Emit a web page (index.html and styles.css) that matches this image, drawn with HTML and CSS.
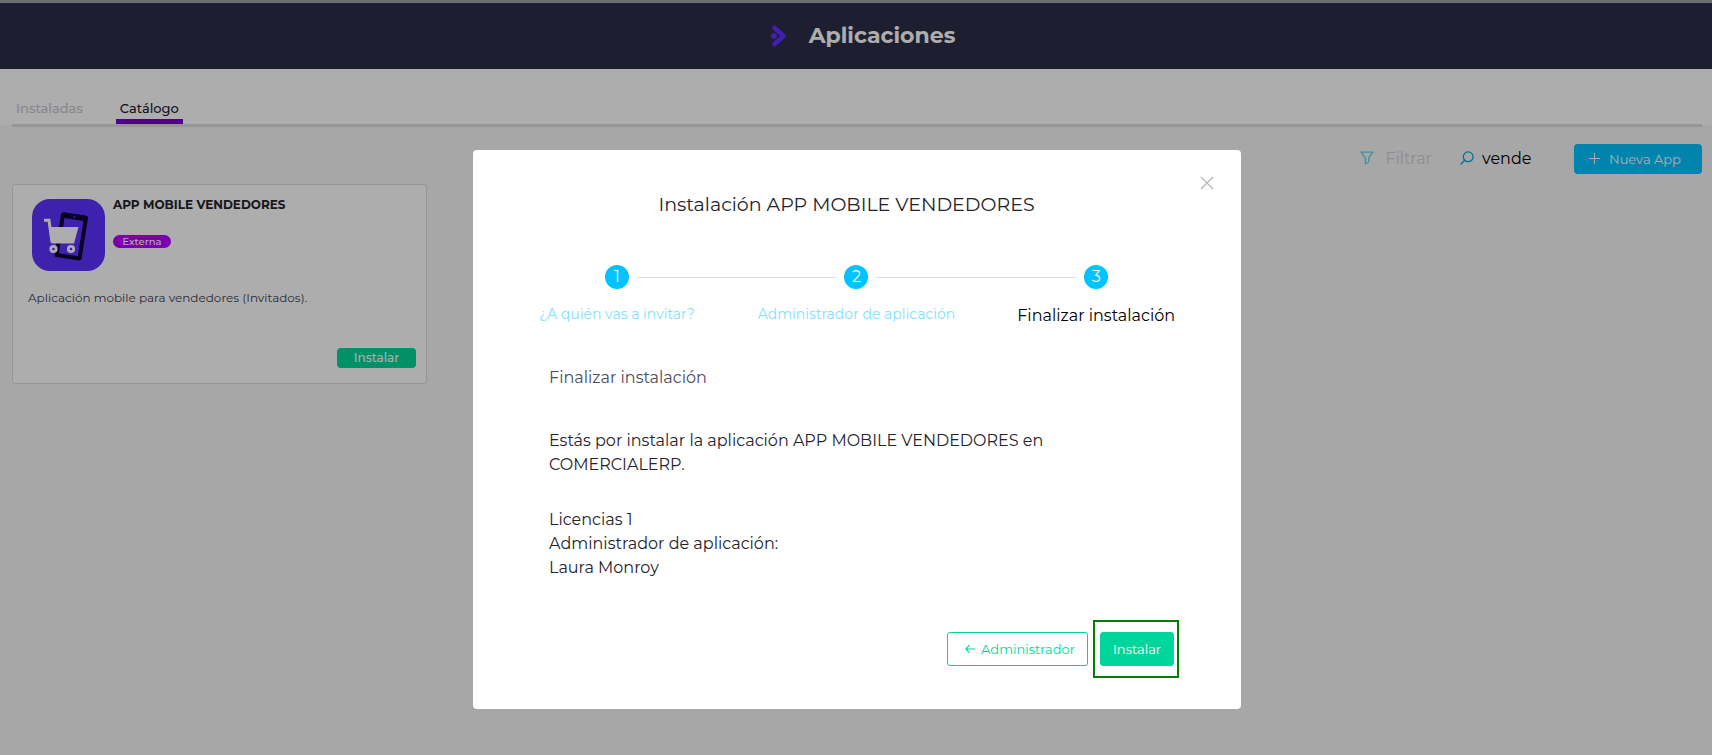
FILE: index.html
```html
<!DOCTYPE html>
<html lang="es">
<head>
<meta charset="utf-8">
<meta name="viewport" content="width=device-width, initial-scale=1">
<title>Aplicaciones</title>
<link rel="stylesheet" href="styles.css">
</head>
<body>
<header class="topbar">
  <svg class="logo" width="18" height="24" viewBox="0 0 18 24" fill="none" aria-hidden="true">
    <path d="M3.500 3.800 12.500 12 3.500 20.200" stroke="#5c32ff" stroke-width="4.600" stroke-linecap="round" stroke-linejoin="round"/>
    <circle cx="3" cy="12" r="2.900" fill="#5c32ff"/>
  </svg>
  <h1 class="topbar-title">Aplicaciones</h1>
</header>
<nav class="tabs-area">
  <div class="tabs">
    <a class="tab" href="#instaladas">Instaladas</a>
    <a class="tab tab-active" href="#catalogo">Catálogo</a>
  </div>
</nav>
<main class="content">
  <div class="toolbar">
    <button class="filter" type="button">
      <svg width="14" height="14" viewBox="0 0 14 14" fill="none" stroke="#6cd2ee" stroke-width="1.300" stroke-linejoin="round" aria-hidden="true"><path d="M1 1.200h12L8.700 7v3.800L5.400 13V7Z"/></svg>
      Filtrar
    </button>
    <label class="search">
      <svg width="14" height="14" viewBox="0 0 14 14" fill="none" stroke="#00a9dc" stroke-width="1.300" stroke-linecap="round" aria-hidden="true"><circle cx="8.200" cy="5.800" r="4.900"/><path d="M4.700 9.300 1 13"/></svg>
      <input class="search-input" type="text" value="vende" aria-label="Buscar">
    </label>
    <button class="new-app" type="button">
      <svg width="12" height="12" viewBox="0 0 12 12" stroke="#fff" aria-hidden="true"><path d="M5.500 0v11M0 5.500h11"/></svg>
      Nueva App
    </button>
  </div>
  <article class="card">
    <div class="card-head">
      <svg class="app-icon" width="73" height="72" viewBox="0 0 73 72" aria-hidden="true">
        <rect width="73" height="72" rx="18" fill="#5c32ff"/>
        <path d="M31 15.500 54 19 47.500 59.500 24.500 56Z" fill="none" stroke="#0b0030" stroke-width="4" stroke-linejoin="round"/>
        <path d="M31 16 54 19.500" stroke="#0b0030" stroke-width="5.500"/>
        <circle cx="42.500" cy="18" r="1" fill="#5c32ff"/>
        <path d="M12 21.200h5l3 22" fill="none" stroke="#fff" stroke-width="3"/>
        <path d="M17.500 28h29L42 44.500H19.500Z" fill="#fff"/>
        <g fill="#5c32ff" stroke="#fff" stroke-width="2.800"><circle cx="21.500" cy="50" r="2.700"/><circle cx="39" cy="50" r="2.700"/></g>
      </svg>
      <div class="card-info">
        <h2 class="card-title">APP MOBILE VENDEDORES</h2>
        <span class="badge">Externa</span>
      </div>
    </div>
    <p class="card-text">Aplicación mobile para vendedores (Invitados).</p>
    <button class="card-button" type="button">Instalar</button>
  </article>
</main>
<div class="overlay">
  <section class="modal" role="dialog" aria-modal="true" aria-labelledby="modal-title">
    <button class="close" type="button" aria-label="Cerrar">
      <svg width="14" height="14" viewBox="0 0 14 14" stroke="#b4b4b8" stroke-width="1.200" aria-hidden="true"><path d="m1 1 12 12M13 1 1 13"/></svg>
    </button>
    <h2 class="modal-title" id="modal-title">Instalación APP MOBILE VENDEDORES</h2>
    <ol class="steps">
      <li class="step"><div class="step-head"><span></span><span class="dot">1</span><span class="line"></span></div><span class="step-label">¿A quién vas a invitar?</span></li>
      <li class="step"><div class="step-head"><span class="line"></span><span class="dot">2</span><span class="line"></span></div><span class="step-label">Administrador de aplicación</span></li>
      <li class="step"><div class="step-head"><span class="line"></span><span class="dot">3</span><span></span></div><span class="step-label step-current">Finalizar instalación</span></li>
    </ol>
    <div class="modal-body">
      <h3 class="section-title">Finalizar instalación</h3>
      <p class="text">Estás por instalar la aplicación APP MOBILE VENDEDORES en COMERCIALERP.</p>
      <p class="text">Licencias 1<br>Administrador de aplicación:<br>Laura Monroy</p>
    </div>
    <div class="actions">
      <button class="btn btn-back" type="button">
        <svg width="11" height="10" viewBox="0 0 11 10" fill="none" stroke="#00d69b" stroke-width="1.200" aria-hidden="true"><path d="M10.500 5H1M4.500 1.200 1 5l3.500 3.800"/></svg>
        Administrador
      </button>
      <div class="highlight"><button class="btn btn-install" type="button">Instalar</button></div>
    </div>
  </section>
</div>
</body>
</html>
```
FILE: styles.css
```css
* { box-sizing: border-box; }
body {
  margin: 0;
  min-height: 100vh;
  background: #f6f6f6;
  color: #23232c;
  font-family: Montserrat, Inter, "Noto Sans", sans-serif;
  font-size: 16px;
}
h1, h2, h3, p, ol { margin: 0; padding: 0; font-weight: 400; }
button, input { font: inherit; border: 0; background: none; padding: 0; }
svg { flex: none; display: block; }

.topbar {
  display: flex;
  align-items: center;
  justify-content: center;
  gap: 20px;
  height: 69px;
  padding-left: 14px;
  border-top: 3px solid #a0a2a9;
  background: #2b2e47;
}
.topbar-title { color: #fff; font-size: 22px; font-weight: 700; line-height: 32px; }

.tabs-area { padding: 28px 10px 0 12px; background: linear-gradient(#fff 56px, #f6f6f6 56px); }
.tabs { display: flex; gap: 29px; border-bottom: 3px solid #dedee2; }
.tab {
  padding: 0 4px;
  border-bottom: 5px solid transparent;
  color: #c8c8d0;
  font-size: 13px;
  font-weight: 500;
  line-height: 22px;
  text-decoration: none;
}
.tab-active { color: #1c1830; border-color: #7600ce; }

.content { padding: 17px 10px 24px 12px; }
.toolbar { display: flex; align-items: center; justify-content: flex-end; margin-bottom: 10px; }
.filter, .search { display: flex; align-items: center; padding-bottom: 2px; }
.filter { gap: 11px; color: #d2d2d6; }
.search { gap: 8px; margin-left: 28px; }
.search-input { width: 92px; color: #000; }
.new-app {
  display: flex;
  align-items: center;
  justify-content: center;
  gap: 8px;
  width: 128px;
  height: 30px;
  padding: 0 6px 1px 0;
  border-radius: 4px;
  background: #00c3ff;
  color: #fff;
  font-size: 13px;
}

.card {
  display: flex;
  flex-direction: column;
  width: 415px;
  min-height: 200px;
  padding: 14px 10px 15px 15px;
  border: 1px solid #dedee2;
  border-radius: 3px;
  background: #fff;
}
.card-head { display: flex; gap: 8px; padding-left: 4px; }
.card-title { font-size: 12px; font-weight: 700; line-height: 12px; margin-bottom: 24px; }
.badge {
  display: block;
  width: 58px;
  border-radius: 7px;
  background: #b500ff;
  color: #fff;
  font-size: 10px;
  font-weight: 500;
  line-height: 13px;
  text-align: center;
}
.card-text { margin-top: 18px; font-size: 12px; line-height: 18px; color: #44444e; }
.card-button {
  align-self: flex-end;
  width: 79px;
  margin-top: auto;
  border-radius: 4px;
  background: #00d69b;
  color: #fff;
  font-size: 12px;
  font-weight: 500;
  line-height: 20px;
}

.overlay {
  position: fixed;
  inset: 0;
  display: flex;
  justify-content: center;
  align-items: flex-start;
  padding: 150px 15px 24px 17px;
  background: rgba(0, 0, 0, .32);
}
.modal {
  position: relative;
  width: 768px;
  max-width: 100%;
  padding: 43px 25px 31px 24px;
  border-radius: 4px;
  background: #fff;
}
.close { position: absolute; top: 26px; right: 27px; }
.modal-title { padding-right: 20px; font-size: 19px; line-height: 24px; text-align: center; }
.steps { display: grid; grid-template-columns: repeat(3, 1fr); margin-top: 48px; list-style: none; }
.step { text-align: center; }
.step-head { display: grid; grid-template-columns: 1fr 24px 1fr; gap: 8px; align-items: center; }
.dot { border-radius: 50%; background: #00c3ff; color: #fff; line-height: 24px; }
.line { height: 1px; background: #dcdcdf; }
.step-label { display: block; margin-top: 13px; font-size: 14px; line-height: 24px; color: #7fe1ff; }
.step-current { margin-top: 15px; font-size: 16px; color: #000; }
.modal-body { padding: 38px 52px 0; }
.section-title { font-size: 16px; line-height: 24px; color: #4c4c5c; margin-bottom: 39px; }
.text { line-height: 24px; margin-bottom: 31px; }
.actions { display: flex; align-items: center; justify-content: flex-end; gap: 5px; margin-top: 40px; padding-right: 37px; }
.btn {
  display: flex;
  align-items: center;
  justify-content: center;
  height: 34px;
  padding-bottom: 1px;
  border: 1px solid #00d69b;
  border-radius: 3px;
  font-size: 13px;
}
.btn-back { gap: 5px; width: 141px; padding-left: 5px; color: #00d69b; }
.btn-install { width: 74px; background: #00d69b; color: #fff; }
.highlight { padding: 10px 3px 10px 5px; border: 2px solid #008000; }
```
